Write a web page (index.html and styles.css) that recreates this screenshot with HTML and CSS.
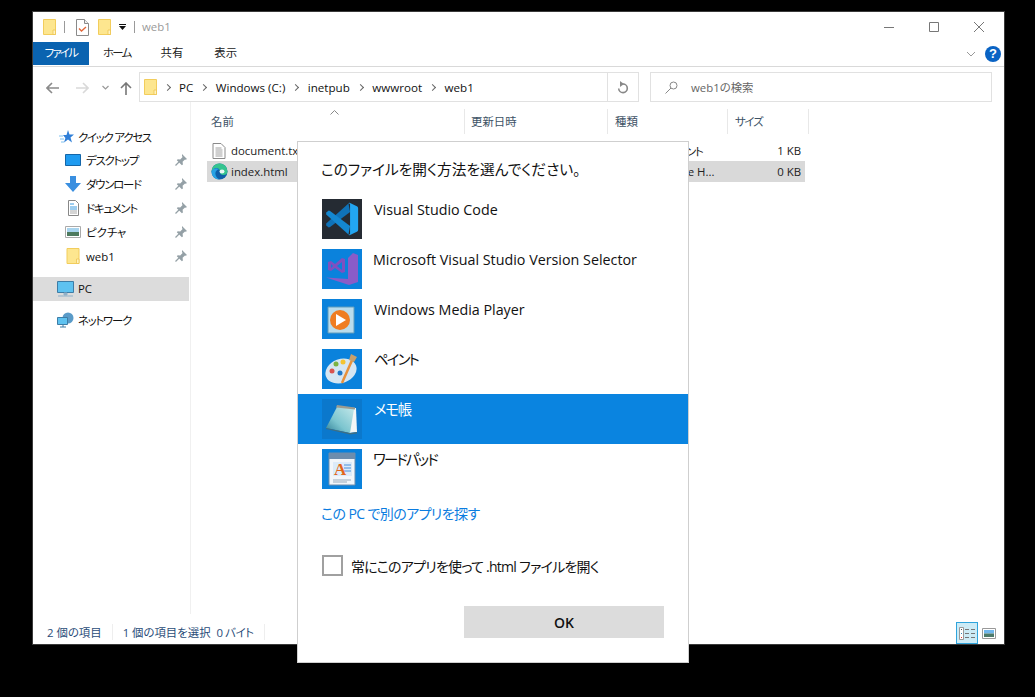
FILE: index.html
```html
<!DOCTYPE html>
<html lang="ja">
<head>
<meta charset="utf-8">
<title>web1</title>
<link rel="stylesheet" href="styles.css">
</head>
<body>
<svg class="defs" width="0" height="0">
  <defs>
    <linearGradient id="pad" x1="1" y1="0" x2="0" y2="1"><stop offset="0" stop-color="#c4e8ea"/><stop offset=".6" stop-color="#7cc5cf"/><stop offset="1" stop-color="#2f7f96"/></linearGradient>
  </defs>
  <symbol id="folder" viewBox="0 0 13 16"><path d="M.5.5h12v15H.5z" fill="#fde68f" stroke="#f2cd5c"/><path d="M10 11h2.500v4.500H10z" fill="#fff3c0" stroke="#eec450" stroke-width=".8"/></symbol>
  <symbol id="pin" viewBox="0 0 12 12"><path d="M7 0l5 5-1.200.8-.8-.4-2.400 2.400.3 2.600-1 .8L1.800 6.200l.9-.9 2.500.2 2.400-2.400-.6-1z" fill="#94a0a6"/><path d="M4 8L.5 11.500" stroke="#94a0a6" stroke-width="1.200"/></symbol>
</svg>

<div class="window">
  <header class="titlebar">
    <svg class="qa-folder" width="13" height="16"><use href="#folder"/></svg>
    <span class="qa-sep sep-a"></span>
    <svg class="qa-doc" width="13" height="17" viewBox="0 0 13 17"><path d="M.5.500h8l4 4v12H.5z" fill="#fff" stroke="#8a8a8a"/><path d="M8.500.5v4h4" fill="#eee" stroke="#8a8a8a"/><path d="M3 9.500l2.500 2.500L10 8" fill="none" stroke="#e2673a" stroke-width="1.400"/></svg>
    <svg class="qa-folder2" width="13" height="16"><use href="#folder"/></svg>
    <svg class="qa-drop" width="7" height="6" viewBox="0 0 7 6"><path d="M0 0h7v1H0zM0 2h7L3.500 6z" fill="#111"/></svg>
    <span class="qa-sep sep-b"></span>
    <span class="win-title">web1</span>
    <span class="win-controls">
      <svg width="12" height="12" viewBox="0 0 12 12"><path d="M1 6.500h10" stroke="#777"/></svg>
      <svg width="12" height="12" viewBox="0 0 12 12"><path d="M1.500 1.500h9v9h-9z" fill="none" stroke="#777"/></svg>
      <svg width="12" height="12" viewBox="0 0 12 12"><path d="M1 1l10 10M11 1L1 11" stroke="#777" fill="none"/></svg>
    </span>
  </header>

  <nav class="ribbon">
    <span class="tab tab-file tighter">ファイル</span>
    <span class="tab tab-home tighter">ホーム</span>
    <span class="tab tab-share">共有</span>
    <span class="tab tab-view">表示</span>
    <svg class="ribbon-chev" width="10" height="6" viewBox="0 0 10 6"><path d="M1 1l4 4 4-4" fill="none" stroke="#999"/></svg>
    <span class="help">?</span>
  </nav>

  <div class="addressrow">
    <svg class="nav-arrow" width="13" height="12" viewBox="0 0 13 12"><path d="M6 1L1 6l5 5M1 6h12" fill="none" stroke="#8a8a8a" stroke-width="1.600"/></svg>
    <svg class="nav-arrow nav-fwd" width="13" height="12" viewBox="0 0 13 12"><path d="M7 1l5 5-5 5M12 6H0" fill="none" stroke="#d9d9d9" stroke-width="1.600"/></svg>
    <svg class="nav-down" width="7" height="5" viewBox="0 0 7 5"><path d="M.5 1l3 3 3-3" fill="none" stroke="#999" stroke-width="1.200"/></svg>
    <svg class="nav-up" width="12" height="13" viewBox="0 0 12 13"><path d="M1 6l5-5 5 5M6 1v12" fill="none" stroke="#777" stroke-width="1.600"/></svg>
    <div class="addressbox">
      <svg class="addr-folder" width="13" height="16"><use href="#folder"/></svg>
      <span class="chev c1"></span><span class="crumb first">PC</span>
      <span class="chev"></span><span class="crumb">Windows (C:)</span>
      <span class="chev"></span><span class="crumb">inetpub</span>
      <span class="chev"></span><span class="crumb">wwwroot</span>
      <span class="chev"></span><span class="crumb">web1</span>
      <span class="refresh"><svg width="12" height="13" viewBox="0 0 12 13"><path d="M6 3a4.300 4.300 0 1 1-4.300 4.500" fill="none" stroke="#888" stroke-width="1.600"/><path d="M3 0l4 3-4 3z" fill="#888"/></svg></span>
    </div>
    <div class="searchbox">
      <svg width="13" height="13" viewBox="0 0 13 13"><circle cx="8.500" cy="4.500" r="3.500" fill="none" stroke="#888"/><path d="M6 7l-5.500 5.500" stroke="#888"/></svg>
      <span>web1の検索</span>
    </div>
  </div>

  <div class="main">
    <aside class="sidebar">
      <div class="side-row quick">
        <svg width="15" height="14" viewBox="0 0 15 14"><path d="M9 0l1.500 4.500H15l-3.500 3 1.500 5-4-3-4 3 1.400-4.500L4 5h3.500z" fill="#2f7fd8"/><path d="M0 6h4M1 9h4M2 12h3" stroke="#7cc0f0"/></svg>
        <span class="tight">クイック アクセス</span>
      </div>
      <div class="side-row sub">
        <svg width="16" height="12" viewBox="0 0 16 12"><path d="M.5.500h15v11H.5z" fill="#1f9bf0" stroke="#1566a8"/></svg>
        <span class="tight">デスクトップ</span><svg class="pin" width="12" height="12"><use href="#pin"/></svg>
      </div>
      <div class="side-row sub">
        <svg width="16" height="16" viewBox="0 0 16 16"><path d="M5 0h6v7h5l-8 9-8-9h5z" fill="#3a8fe0"/></svg>
        <span class="tight">ダウンロード</span><svg class="pin" width="12" height="12"><use href="#pin"/></svg>
      </div>
      <div class="side-row sub">
        <svg width="16" height="16" viewBox="0 0 16 16"><path d="M3.500.5h7l3 3v12h-10z" fill="#fff" stroke="#888"/><path d="M5 4h4M5 7h7M5 9h7" stroke="#3a9be0"/><path d="M5 11h7M5 13h7" stroke="#aaa"/></svg>
        <span class="tight">ドキュメント</span><svg class="pin" width="12" height="12"><use href="#pin"/></svg>
      </div>
      <div class="side-row sub">
        <svg width="16" height="12" viewBox="0 0 16 12"><path d="M.5.500h15v11H.5z" fill="#fff" stroke="#aaa"/><path d="M2 2h12v4H2z" fill="#a8d4ee"/><path d="M2 6h12v4H2z" fill="#4d7a5e"/></svg>
        <span>ピクチャ</span><svg class="pin" width="12" height="12"><use href="#pin"/></svg>
      </div>
      <div class="side-row sub">
        <svg width="16" height="16"><use href="#folder"/></svg>
        <span>web1</span><svg class="pin" width="12" height="12"><use href="#pin"/></svg>
      </div>
      <div class="side-row pc">
        <svg width="17" height="16" viewBox="0 0 17 16"><path d="M.5.500h16v11H.5z" fill="#5ec2f0" stroke="#3e7da6"/><path d="M7 12h3v2H7zM1 15h15" stroke="#8fb0c8" fill="#8fb0c8"/></svg>
        <span>PC</span>
      </div>
      <div class="side-row net">
        <svg width="17" height="16" viewBox="0 0 17 16"><circle cx="11" cy="6" r="5.500" fill="#5a9bc8"/><path d="M.5 5.500h10v7H.5z" fill="#5ec2f0" stroke="#3e7da6"/><path d="M3 15h6M6 13v2" stroke="#3e7da6"/></svg>
        <span class="tight">ネットワーク</span>
      </div>
    </aside>

    <section class="files">
      <div class="sort-caret"><svg width="9" height="5" viewBox="0 0 9 5"><path d="M.5 4.500l4-4 4 4" fill="none" stroke="#888"/></svg></div>
      <div class="cols">
        <span class="col col-name">名前</span>
        <span class="col col-date">更新日時</span>
        <span class="col col-type">種類</span>
        <span class="col col-size"><span class="tight">サイズ</span></span>
      </div>
      <div class="file">
        <svg width="16" height="16" viewBox="0 0 13 16"><path d="M.5.500h8l4 4v11H.5z" fill="#fff" stroke="#8a8a8a"/><path d="M3 5h6M3 7h7M3 9h7M3 11h7M3 13h7" stroke="#a0a0a0"/></svg>
        <span class="fname">document.txt</span>
        <span class="ftype tight">テキスト ドキュメント</span>
        <span class="fsize">1 KB</span>
      </div>
      <div class="file selected">
        <svg width="17" height="17" viewBox="0 0 17 17"><circle cx="8.500" cy="8.500" r="8" fill="#0f5fa8"/><path d="M.5 8.500a8 8 0 0 1 16 0c0 2.500-2 3.500-4 3.500-2.500 0-4-1.500-3.500-3C9.500 6 6 4 3.500 5.500 1.500 6.500.5 8.500.5 8.500z" fill="#35c48f"/><path d="M.5 8.500C2 5 6 4.500 8 6.500c-2 0-4 2-3.500 5 .3 2.200 2 4 4 5-4.500 0-8-3.500-8-8z" fill="#27a2e4"/><ellipse cx="11" cy="8.500" rx="2.500" ry="2" fill="#e8f6f4"/></svg>
        <span class="fname">index.html</span>
        <span class="ftype">Microsoft Edge H...</span>
        <span class="fsize">0 KB</span>
      </div>
    </section>
  </div>

  <footer class="status">
    <span class="st1">2 個の項目</span>
    <span class="st2">1 個の項目を選択</span>
    <span class="st3">0 バイト</span>
    <span class="view view-on"><svg width="16" height="13" viewBox="0 0 16 13"><path d="M.5.500h4v12h-4z" fill="#fff" stroke="#999"/><path d="M6 2.500h4M12 2.500h4M6 6.500h4M12 6.500h4M6 10.500h4M12 10.500h4" stroke="#777"/><path d="M2 2h1v1H2z" fill="#555"/><path d="M2 6h1v1H2z" fill="#38b"/><path d="M2 10h1v1H2z" fill="#d33"/></svg></span>
    <span class="view"><svg width="14" height="11" viewBox="0 0 14 11"><path d="M.5.500h13v10H.5z" fill="#fff" stroke="#999"/><path d="M2 2h10v3.500H2z" fill="#6fb6ec"/><path d="M2 5.500h10V9H2z" fill="#4d7a6a"/></svg></span>
  </footer>
</div>

<div class="dialog">
  <h1 class="dlg-title">このファイルを開く方法を選んでください。</h1>
  <div class="app">
    <span class="app-icon dark"><svg width="40" height="40" viewBox="-12 -12 124 124"><path d="M70 2L1 64v6l8 6 4-1 62-47z" fill="#0f72b8"/><path d="M70 98L1 36v-6l8-6 4 1 62 47z" fill="#1487d0"/><path d="M75 .5l21 10q4 2 4 6.500v66q0 4.500-4 6.500l-21 10q-3 1.500-7-1.500 5 2 7-2V4q-2-4-7-2 4-3 7-1.500z" fill="#22a6f2"/></svg></span>
    <span class="app-name">Visual Studio Code</span>
  </div>
  <div class="app">
    <span class="app-icon"><svg width="40" height="40" viewBox="0 0 40 40"><path d="M31 4l5 2v27l-9 3-23-7.500L26 30V9z" fill="#8a5cc8"/><path d="M6 13l3-1 4 3 7-6 3 1v13l-3 1-7-5-4 3-3-1zM9 15v4l2-2zM20 13l-5 4 5 4z" fill="#7f50c0" fill-rule="evenodd"/></svg></span>
    <span class="app-name narrow">Microsoft Visual Studio Version Selector</span>
  </div>
  <div class="app">
    <span class="app-icon"><svg width="40" height="40" viewBox="0 0 40 40"><path d="M6 8h26v26H6z" fill="#b9dcec" stroke="#5e9cbc"/><circle cx="18" cy="21" r="10" fill="#ef7d22"/><path d="M14 15l10 6-10 6z" fill="#fff"/></svg></span>
    <span class="app-name">Windows Media Player</span>
  </div>
  <div class="app">
    <span class="app-icon"><svg width="40" height="40" viewBox="0 0 40 40"><ellipse cx="19" cy="22" rx="16" ry="12" fill="#d5e6f2" transform="rotate(-20 19 22)"/><circle cx="10" cy="22" r="2.500" fill="#d9534f"/><circle cx="14" cy="15" r="2.500" fill="#7cb342"/><circle cx="21" cy="13" r="2.500" fill="#f4c430"/><circle cx="18" cy="24" r="2.500" fill="#1e78c8"/><path d="M31 9L20 34" stroke="#e8913a" stroke-width="2.500"/><path d="M29 5l6 3-3 5-5-2z" fill="#c9a06a"/></svg></span>
    <span class="app-name tighter">ペイント</span>
  </div>
  <div class="app active">
    <span class="app-icon"><svg width="40" height="40" viewBox="0 0 40 40"><path d="M16 8l18 1 1 24-8 1z" fill="#f2f6f6"/><path d="M15 8l17 2-4 24L4 29z" fill="url(#pad)"/><path d="M15 6l18 2.500V10.500L14 8.500z" fill="#9c9c90"/><path d="M4 29l24 5 7-1v1.500l-7 1L4 30z" fill="#3f6f82"/></svg></span>
    <span class="app-name tight">メモ帳</span>
  </div>
  <div class="app">
    <span class="app-icon"><svg width="40" height="40" viewBox="0 0 40 40"><path d="M7 4h26v32H7z" fill="#f2f6fa" stroke="#6d8dad"/><path d="M7 4h26v6H7z" fill="#6d8dad"/><path d="M11 13h19v14H11z" fill="#dcebf9"/><path d="M11 31h18M11 33h14" stroke="#9ab"/><path d="M22 16h7M22 19h7M22 22h7" stroke="#4a90d9"/></svg><span class="wp-a">A</span></span>
    <span class="app-name narrow tighter">ワードパッド</span>
  </div>
  <a class="more">この PC で別のアプリを探す</a>
  <label class="always"><span class="checkbox"></span><span>常にこのアプリを使って .html ファイルを開く</span></label>
  <div class="actions"><button class="ok">OK</button></div>
</div>
</body>
</html>
```

FILE: styles.css
```css
* { box-sizing: border-box; }
html, body { margin: 0; height: 100%; }
body {
  background: #000;
  padding: 11px 0 0 32px;
  overflow: hidden;
  position: relative;
  font-family: "Open Sans", "Noto Sans CJK JP", sans-serif;
  font-size: 11.4px;
  font-feature-settings: "palt";
  color: #111;
}
.defs { position: absolute; }
.tight { letter-spacing: -1.2px; }
.tighter { letter-spacing: -1.7px; }

.window {
  width: 973px;
  height: 634px;
  background: #fff;
  border: 1px solid #3a3a3a;
  display: flex;
  flex-direction: column;
}

/* title bar */
.titlebar { height: 30px; display: flex; align-items: center; padding-left: 10px; flex: none; }
.qa-sep { width: 1px; height: 12px; background: #9a9a9a; }
.sep-a { margin-left: 8px; }
.qa-doc { margin-left: 11px; }
.qa-folder2 { margin-left: 9px; }
.qa-drop { margin-left: 8px; }
.sep-b { margin-left: 8px; }
.win-title { margin-left: 7px; color: #9a9a9a; line-height: 28px; height: 28px; margin-bottom: 1px; }
.win-controls { margin-left: auto; display: flex; gap: 33px; padding-right: 19px; }

/* ribbon */
.ribbon { height: 25px; flex: none; display: flex; border-bottom: 1px solid #d9d9d9; position: relative; align-items: flex-start; }
.tab { height: 23px; line-height: 22px; color: #222; }
.tab-file { width: 56px; background: #0a63b0; color: #fff; text-align: center; }
.tab-home { margin-left: 14px; }
.tab-share { margin-left: 30px; }
.tab-view { margin-left: 31px; }
.ribbon-chev { margin: 9px 0 0 auto; }
.help { width: 16px; height: 16px; margin: 4px 3px 0 9px; border-radius: 50%; background: #0a63c4; color: #fff; font: bold 13px/16px "Liberation Sans", sans-serif; text-align: center; }

/* address */
.addressrow { height: 35px; flex: none; padding-top: 5px; display: flex; align-items: flex-start; }
.nav-arrow { margin: 10px 0 0 13px; }
.nav-fwd { margin-left: 17px; }
.nav-down { margin: 13px 0 0 13px; }
.nav-up { margin: 10px 0 0 11px; }
.addressbox { margin-left: 7px; width: 500px; height: 30px; border: 1px solid #e1e1e1; display: flex; align-items: center; padding-left: 4px; position: relative; }
.chev { width: 5px; height: 5px; border-top: 1px solid #666; border-right: 1px solid #666; transform: rotate(45deg); margin: 0 8px 0 8px; }
.c1 { margin-left: 8px; }
.crumb { color: #111; margin-left: 1.5px; font-size: 11.6px; }
.crumb.first { margin-left: 1px; }
.refresh { position: absolute; right: 0; top: 0; width: 31px; height: 28px; border-left: 1px solid #e1e1e1; display: flex; align-items: center; justify-content: center; }
.searchbox { margin-left: 11px; width: 342px; height: 30px; border: 1px solid #e1e1e1; display: flex; align-items: center; padding-left: 14px; gap: 13px; color: #666; }

/* main */
.main { flex: 1; display: flex; min-height: 0; }
.sidebar { width: 158px; flex: none; border-right: 1px solid #f0f0f0; padding-top: 23px; }
.side-row { display: flex; align-items: center; height: 24px; color: #111; }
.side-row span { white-space: nowrap; }
.quick { padding-left: 26px; gap: 4px; height: 23px; }
.sub { padding-left: 32px; gap: 5px; }
.sub > svg:first-child { width: 16px; }
.pin { margin-left: auto; margin-right: 3px; }
.side-row.pc { margin-top: 9px; padding: 0 0 1px 24px; gap: 4px; background: #dcdcdc; width: 156px; }
.net { margin-top: 7px; padding-left: 24px; gap: 4px; }

.files { flex: 1; padding: 7px 0 0 16px; position: relative; }
.sort-caret { position: absolute; left: 139px; top: 8px; line-height: 0; }
.cols { display: flex; height: 25px; color: #3d5266; }
.col { border-right: 1px solid #e8e8e8; padding-left: 4px; line-height: 25px; }
.col-name { width: 258px; }
.col-date { width: 143px; padding-left: 6px; }
.col-type { width: 120px; padding-left: 7px; }
.col-size { width: 81px; padding-left: 7px; }
.file { display: grid; grid-template-columns: 24px 384px 1fr auto; align-items: center; height: 21px; width: 598px; color: #222; }
.cols + .file { margin-top: 6px; }
.file.selected { background: #d9d9d9; }
.file svg { justify-self: center; }
.ftype { white-space: nowrap; }
.fsize { padding-right: 4px; }

/* status */
.status { height: 30px; flex: none; display: flex; align-items: center; padding: 6px 0 0 14px; color: #2a4c78; position: relative; }
.st1 { padding-right: 10px; border-right: 1px solid #eee; }
.st2 { margin-left: 10px; }
.st3 { margin-left: 6px; padding-right: 10px; border-right: 1px solid #eee; letter-spacing: -.4px; }
.view { display: flex; align-items: center; justify-content: center; height: 22px; align-self: flex-end; }
.view-on { margin-left: auto; width: 22px; border: 1px solid #2fa4dc; background: #ccebf6; }
.view:last-child { width: 14px; margin: 0 8px 0 4px; }

/* dialog */
.dialog {
  position: absolute;
  left: 297px;
  top: 141px;
  width: 392px;
  height: 522px;
  background: #fff;
  border: 1px solid #cfcfcf;
}
.dlg-title { margin: 17px 0 14px 23px; font-size: 14.7px; font-weight: 400; line-height: 21px; color: #111; }
.app { height: 50px; display: flex; padding: 5px 0 0 24px; color: #111; font-size: 14.3px; }
.app-icon { width: 40px; height: 40px; background: #0a82dc; flex: none; position: relative; }
.app-icon svg { display: block; }
.dark { background: #252b33; }
.app-name { margin-left: 12px; line-height: 21px; }
.narrow { margin-left: 11px; }
.app.active { background: #0a84e0; color: #fff; }
.app.active .app-icon { background: #0b78cc; }
.wp-a { position: absolute; left: 12px; top: 11px; font: bold 17px "Liberation Serif", serif; color: #e2671a; }
.more { display: block; margin: 9px 0 0 23px; line-height: 21px; color: #0a7ce0; font-size: 14px; letter-spacing: -.6px; }
.always { display: flex; align-items: center; margin: 31px 0 0 24px; gap: 8px; font-size: 14px; letter-spacing: -.75px; color: #111; }
.checkbox { width: 21px; height: 21px; border: 2px solid #a0a0a0; }
.actions { display: flex; justify-content: flex-end; padding-right: 24px; margin-top: 30px; }
.ok { width: 200px; height: 32px; background: #dcdcdc; border: 0; font: 600 14px "Open Sans", sans-serif; color: #111; }
```
